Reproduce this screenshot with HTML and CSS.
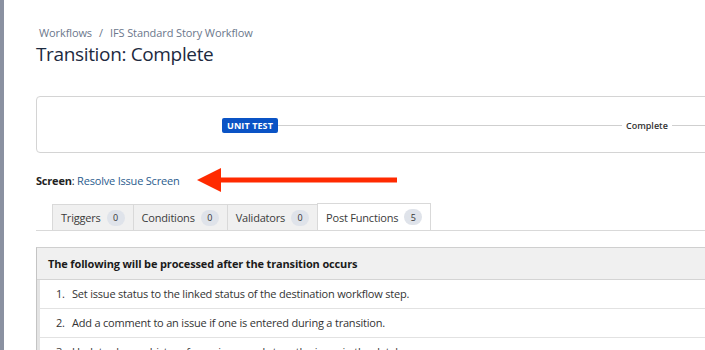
FILE: index.html
```html
<!DOCTYPE html>
<html>
<head>
<meta charset="utf-8">
<link rel="stylesheet" href="styles.css">
</head>
<body>
<div class="page">
  <div class="strip"></div>
  <main class="content">
    <nav class="crumbs"><span>Workflows</span><span class="sep">/</span><span>IFS Standard Story Workflow</span></nav>
    <h1 class="title">Transition: Complete</h1>
    <div class="diagram">
      <span class="lozenge">UNIT TEST</span>
      <span class="line first"></span>
      <span class="label">Complete</span>
      <span class="line rest"></span>
    </div>
    <div class="screen-row">
      <p class="screen"><b>Screen</b>: <a href="#">Resolve Issue Screen</a></p>
      <svg class="arrow" width="202" height="26" viewBox="0 0 202 26">
        <polygon points="0,13 24,1 24,25" fill="#ff2a00"/>
        <rect x="22" y="10.5" width="178" height="5" fill="#ff2a00"/>
      </svg>
    </div>
    <div class="tabs">
      <div class="tab">Triggers <span class="badge">0</span></div>
      <div class="tab">Conditions <span class="badge">0</span></div>
      <div class="tab">Validators <span class="badge">0</span></div>
      <div class="tab active">Post Functions <span class="badge">5</span></div>
    </div>
    <div class="table">
      <div class="thead">The following will be processed after the transition occurs</div>
      <ol class="rows">
        <li><span class="num">1.</span>Set issue status to the linked status of the destination workflow step.</li>
        <li><span class="num">2.</span>Add a comment to an issue if one is entered during a transition.</li>
        <li><span class="num">3.</span>Update change history for an issue and store the issue in the database.</li>
      </ol>
    </div>
  </main>
</div>
</body>
</html>
```
FILE: styles.css
```css
html, body {
  margin: 0;
  padding: 0;
  background: #fff;
  overflow: hidden;
  height: 350px;
}
body {
  font-family: "Open Sans", "Noto Sans", sans-serif;
  color: #172b4d;
}
.page {
  display: flex;
  height: 350px;
}
.strip {
  width: 4px;
  flex: none;
  background: #8a91a1;
}
.content {
  flex: none;
  width: 900px;
  padding-left: 32px;
}
.crumbs {
  margin-top: 25px;
  font-size: 11px;
  line-height: 16px;
  color: #6b778c;
  padding-left: 3px;
  display: flex;
  gap: 6px;
  letter-spacing: -0.1px;
}
.crumbs .sep { margin: 0 1px; }
.title {
  margin: 0;
  font-size: 19px;
  font-weight: 400;
  line-height: 26px;
  color: #1d2a3f;
  letter-spacing: -0.35px;
}
.diagram {
  margin-top: 29px;
  height: 57px;
  border: 1px solid #d4d4d4;
  border-radius: 4px;
  display: flex;
  align-items: center;
  padding-left: 185px;
  box-sizing: border-box;
  padding-top: 2px;
}
.lozenge {
  background: #0a53c5;
  color: #fff;
  font-size: 9px;
  font-weight: 700;
  line-height: 15px;
  padding: 0 5px;
  border-radius: 2px;
  letter-spacing: 0.1px;
}
.line {
  height: 1px;
  background: #cfcfcf;
}
.line.first { width: 344px; }
.line.rest { flex: 1; }
.label {
  font-size: 9px;
  font-weight: 600;
  color: #333;
  margin: 0 4px;
}
.screen-row {
  display: flex;
  align-items: center;
  margin-top: 14px;
  height: 26px;
}
.screen {
  margin: 0;
  font-size: 11px;
  color: #222;
  letter-spacing: -0.2px;
}
.screen b { font-weight: 700; }
.screen a {
  color: #2b5c8e;
  text-decoration: none;
}
.arrow {
  margin-left: 18px;
  flex: none;
}
.tabs {
  margin-top: 11px;
  display: flex;
  padding-left: 16px;
  border-bottom: 1px solid #d9d9d9;
  height: 26px;
}
.tab {
  display: flex;
  align-items: center;
  gap: 6px;
  font-size: 11px;
  color: #3b3b3b;
  background: #f0f0f0;
  border: 1px solid #d9d9d9;
  border-bottom: none;
  border-right: none;
  padding: 0 8px 0 8px;
  box-sizing: border-box;
  height: 26px;
  letter-spacing: -0.2px;
}
.tab.active {
  background: #fff;
  border-right: 1px solid #d9d9d9;
  height: 27px;
  margin-top: -1px;
  margin-bottom: -1px;
  padding-right: 8px;
}
.badge {
  display: inline-flex;
  align-items: center;
  justify-content: center;
  min-width: 18px;
  height: 16px;
  border-radius: 8px;
  background: #dfe3ea;
  font-size: 9px;
  color: #333;
  letter-spacing: 0;
}
.table {
  margin-top: 16px;
  border-top: 1px solid #cfcfcf;
  border-left: 1px solid #c4c4c4;
  box-shadow: inset 3px 0 0 #e4e4e4;
}
.thead {
  background: #f0f0f0;
  height: 31px;
  line-height: 31px;
  padding-left: 11px;
  font-size: 11px;
  font-weight: 700;
  color: #1b1b1b;
  border-bottom: 1px solid #d4d4d4;
  letter-spacing: -0.15px;
}
.rows {
  list-style: none;
  margin: 0;
  padding: 0;
}
.rows li {
  height: 28px;
  line-height: 28px;
  font-size: 11px;
  color: #333;
  border-bottom: 1px solid #e2e2e2;
  padding-left: 16px;
  margin-left: 3px;
  letter-spacing: -0.2px;
}
.num {
  display: inline-block;
  width: 16px;
}
```
